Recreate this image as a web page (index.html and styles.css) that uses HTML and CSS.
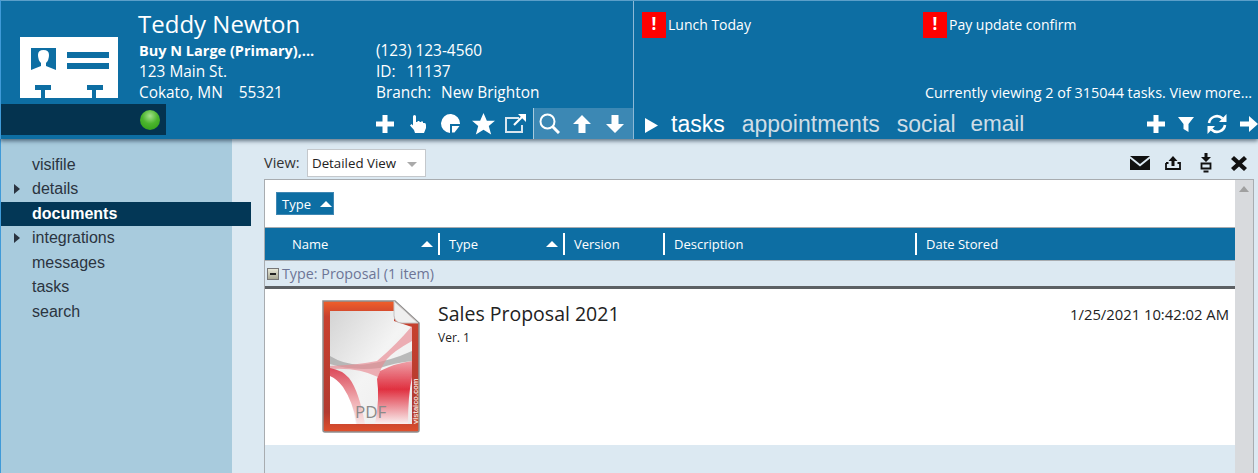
FILE: index.html
```html
<!DOCTYPE html>
<html lang="en">
<head>
<meta charset="utf-8">
<title>Teddy Newton</title>
<link rel="stylesheet" href="styles.css">
</head>
<body>
<div class="app">
  <header class="header">
    <section class="contact">
      <div class="contact-top">
        <div class="card-col">
          <svg width="98" height="61" viewBox="0 0 98 61">
            <path fill="#fff" d="M0 0H98V61H76V53H83V48H67V53H72V61H25V53H31V48H15V53H21V61H0Z"/>
            <path fill="#0d6ea3" d="M11 11H36V33L26 29V26Q29 23 29 18 29 13 23.500 13 18 13 18 18 18 23 21 26V29L11 33Z"/>
            <rect fill="#0d6ea3" x="47" y="15" width="42" height="6"/>
            <rect fill="#0d6ea3" x="47" y="26" width="42" height="6"/>
          </svg>
        </div>
        <div class="info">
          <h1 class="name">Teddy Newton</h1>
          <div class="info-grid">
            <div>
              <div class="line strong">Buy N Large (Primary),...</div>
              <div class="line">123 Main St.</div>
              <div class="line">Cokato, MN<span class="gap-zip">55321</span></div>
            </div>
            <div>
              <div class="line">(123) 123-4560</div>
              <div class="line">ID:<span class="gap-id">11137</span></div>
              <div class="line">Branch:<span class="gap-branch">New Brighton</span></div>
            </div>
          </div>
        </div>
      </div>
      <div class="contact-bottom">
        <div class="status-bar"><span class="status-dot"></span></div>
        <div class="tools">
          <div class="tool-group">
            <span class="tool"><svg width="18" height="18" viewBox="0 0 18 18"><path fill="#fff" d="M6.500 0H11.500V6.500H18V11.500H11.500V18H6.500V11.500H0V6.500H6.500Z"/></svg></span>
            <span class="tool"><svg width="16" height="18" viewBox="0 0 16 18"><path fill="#fff" d="M3 1.500A1.500 1.500 0 0 1 6 1.500V7H7.500V6H9.500V7H11V6.500H13V8H14.500Q16 8 16 10V13L14 18H5L4 15 0 10.500 1.500 9 3 10.500Z"/></svg></span>
            <span class="tool"><svg width="20" height="19" viewBox="0 0 20 19"><path fill="#fff" d="M19 10A9.500 9.500 0 1 0 9 19V10ZM11 12H18.500L13.500 18.500H11Z"/></svg></span>
            <span class="tool"><svg width="23" height="22" viewBox="0 0 24 23"><path fill="#fff" d="M12 0L15.500 8H24L17.500 13.500 20 22.500 12 17.500 4 22.500 6.500 13.500 0 8H8.500Z"/></svg></span>
            <span class="tool"><svg width="22" height="19" viewBox="0 0 22 19"><path fill="none" stroke="#d8e6ef" stroke-width="2" d="M14 4H1V18H17V11"/><path fill="none" stroke="#fff" stroke-width="2.200" d="M9 11L17 3"/><path fill="#fff" d="M13 0H21V8Z"/></svg></span>
          </div>
          <div class="tool-group alt">
            <span class="tool"><svg width="21" height="21" viewBox="0 0 21 21"><circle cx="8.500" cy="8.500" r="7" fill="none" stroke="#fff" stroke-width="2"/><path stroke="#fff" stroke-width="3" d="M13.500 13.500L20 20"/></svg></span>
            <span class="tool"><svg width="18" height="18" viewBox="0 0 18 18"><path fill="#fff" d="M9 0L18 9H12.500V18H5.500V9H0Z"/></svg></span>
            <span class="tool"><svg width="18" height="18" viewBox="0 0 18 18"><path fill="#fff" d="M9 18L18 9H12.500V0H5.500V9H0Z"/></svg></span>
          </div>
        </div>
      </div>
    </section>
    <section class="activity">
      <div class="alerts">
        <div class="alert alert-first"><span class="bang">!</span><span class="alert-text">Lunch Today</span></div>
        <div class="alert"><span class="bang">!</span><span class="alert-text">Pay update confirm</span></div>
      </div>
      <div class="viewing">Currently viewing 2 of 315044 tasks. View more...</div>
      <div class="tabs">
        <svg class="play" width="13" height="15" viewBox="0 0 13 15"><path fill="#fff" d="M0 0L13 7.500 0 15Z"/></svg>
        <span class="tab active">tasks</span>
        <span class="tab">appointments</span>
        <span class="tab tab-tight">social</span>
        <span class="tab tab-narrow">email</span>
        <div class="tab-tools">
          <svg width="18" height="18" viewBox="0 0 18 18"><path fill="#fff" d="M6.500 0H11.500V6.500H18V11.500H11.500V18H6.500V11.500H0V6.500H6.500Z"/></svg>
          <svg width="16" height="15" viewBox="0 0 16 15"><path fill="#fff" d="M0 0H16L10.500 7V15L5.500 12V7Z"/></svg>
          <svg width="20" height="20" viewBox="0 0 20 20"><path fill="none" stroke="#fff" stroke-width="2.600" d="M2 9A8 8 0 0 1 15.500 4.500M18 11A8 8 0 0 1 4.500 15.500"/><path fill="#fff" d="M19.500 0V8H12ZM0.500 20V12H8Z"/></svg>
          <svg width="18" height="16" viewBox="0 0 18 16"><path fill="#fff" d="M0 5.500H9V0L18 8 9 16V10.500H0Z"/></svg>
        </div>
      </div>
    </section>
  </header>
  <div class="body">
    <nav class="side">
      <div class="side-item">visifile</div>
      <div class="side-item more">details</div>
      <div class="side-item current">documents</div>
      <div class="side-item more">integrations</div>
      <div class="side-item">messages</div>
      <div class="side-item">tasks</div>
      <div class="side-item">search</div>
    </nav>
    <main class="main">
      <div class="viewbar">
        <span class="view-label">View:</span>
        <div class="select"><span>Detailed View</span><i class="select-arrow"></i></div>
        <div class="actions">
          <svg width="20" height="14" viewBox="0 0 20 14"><path fill="#111" d="M0 0H20L10 8ZM0 2.500L10 10.500 20 2.500V14H0Z"/></svg>
          <svg width="16" height="14" viewBox="0 0 16 14"><path fill="#111" d="M8 0L12.500 5H9.500V10H6.500V5H3.500Z"/><path fill="none" stroke="#111" stroke-width="1.800" d="M1 7V13H15V7H12.500M1 7H3.500"/></svg>
          <svg width="12" height="20" viewBox="0 0 12 20"><path fill="#111" d="M4.500 0H7.500V4H11L6 9 1 4H4.500Z"/><path fill="none" stroke="#111" stroke-width="1.800" d="M1.500 10.500H10.500V15.500H1.500Z"/><rect fill="#111" x="3.500" y="17.500" width="5" height="2"/></svg>
          <svg width="16" height="15" viewBox="0 0 16 15"><path fill="#111" d="M3 0L8 4.500 13 0 16 3 11 7.500 16 12 13 15 8 10.500 3 15 0 12 5 7.500 0 3Z"/></svg>
        </div>
      </div>
      <div class="panel">
        <div class="grid-area">
          <div class="groupbar">
            <div class="chip">Type <i class="up up-chip"></i></div>
          </div>
          <div class="thead">
            <div class="th th-name"><span>Name</span><i class="up"></i></div>
            <div class="th th-type"><span>Type</span><i class="up"></i></div>
            <div class="th th-version">Version</div>
            <div class="th th-desc">Description</div>
            <div class="th">Date Stored</div>
          </div>
          <div class="group-row"><span class="collapse"></span>Type: Proposal (1 item)</div>
          <div class="row">
            <div class="thumb">
              <svg width="100" height="135" viewBox="0 0 100 135">
                <defs>
                  <linearGradient id="rim" x1="0" y1="0" x2="0" y2="1"><stop offset="0" stop-color="#f0602a"/><stop offset=".12" stop-color="#c8402e"/><stop offset=".85" stop-color="#b23a30"/><stop offset="1" stop-color="#e0502c"/></linearGradient>
                  <linearGradient id="sheet" x1="0" y1="0" x2="1" y2="1"><stop offset="0" stop-color="#d4d4d4"/><stop offset=".5" stop-color="#f4f4f4"/><stop offset="1" stop-color="#ececec"/></linearGradient>
                  <linearGradient id="ribbon" x1="0" y1="0" x2="0" y2="1"><stop offset="0" stop-color="#eea0a8"/><stop offset=".45" stop-color="#e03040"/><stop offset=".72" stop-color="#ec9098"/><stop offset="1" stop-color="#faf0f0"/></linearGradient>
                  <linearGradient id="fade" x1="0" y1="0" x2="0" y2="1"><stop offset="0" stop-color="#dc4858"/><stop offset=".6" stop-color="#f0b0b4"/><stop offset="1" stop-color="#f8e4e4"/></linearGradient>
                  <filter id="soft" x="-5%" y="-5%" width="110%" height="110%"><feGaussianBlur stdDeviation=".7"/></filter>
                </defs>
                <path fill="url(#rim)" stroke="#8e8e8e" stroke-width="1.500" d="M1 2H73L97 24V131Q97 133 95 133H3Q1 133 1 131Z"/>
                <path fill="url(#sheet)" d="M8 12H72V22L90 28V125H8Z"/>
                <g filter="url(#soft)">
                  <path fill="#ababab" opacity=".8" d="M8 57Q26 68 46 65 68 62 90 52V62Q72 64 58 69 30 72 8 65Z"/>
                  <path fill="#e88890" opacity=".65" d="M90 27V42Q72 52 65 60 59 68 56 78 36 68 8 70V67Q36 66 55 62 74 46 90 27Z"/>
                  <path fill="url(#ribbon)" d="M58 72Q74 64 90 62V78Q86 96 86 125H53Q58 100 55 80Z"/>
                  <path fill="#fff" d="M8 77Q16 80 21 87 30 100 34 125H8Z"/>
                  <path fill="url(#fade)" d="M8 69Q20 71 27 79 37 92 43 125H35Q31 103 21 88 15 80 8 77Z"/>
                </g>
                <text class="pdf-label" x="33" y="119">PDF</text>
                <text class="pdf-mark" transform="translate(96 125) rotate(-90)">vistaico.com</text>
                <path fill="#efefef" stroke="#c4c4c4" d="M72 2L96 24H80Q73 24 72 17Z"/>
              </svg>
            </div>
            <div class="doc">
              <div class="doc-title">Sales Proposal 2021</div>
              <div class="doc-ver">Ver. 1</div>
            </div>
            <div class="doc-date">1/25/2021 10:42:02 AM</div>
          </div>
        </div>
        <div class="scrollbar"><i class="scroll-up"></i></div>
      </div>
    </main>
  </div>
</div>
</body>
</html>
```

FILE: styles.css
```css
* { box-sizing: border-box; }
html, body { margin: 0; height: 100%; overflow: hidden; }
body { font-family: "Open Sans", "Noto Sans", sans-serif; background: #dce9f2; }
.app { display: flex; flex-direction: column; height: 473px; width: 1258px; overflow: hidden; }

.header {
  position: relative; z-index: 2; display: flex; flex: 0 0 139px; height: 139px;
  background: #0d6ea3; color: #fff; border-top: 1px solid #5b9fc9; border-left: 1px solid #3f9ad8;
  box-shadow: 0 2px 4px rgba(20, 40, 60, .6);
}
.contact { flex: 0 0 633px; min-width: 0; display: flex; flex-direction: column; border-right: 1px solid #8db9d6; }
.contact-top { display: flex; height: 103px; }
.card-col { flex: 0 0 137px; padding: 36px 0 0 19px; }
.info { flex: 1; padding-top: 8px; }
.name { margin: 0; font-size: 24px; font-weight: 400; line-height: 29px; }
.info-grid { display: grid; grid-template-columns: 237px 1fr; margin-top: 2px; padding-left: 1px; }
.line { font-size: 15.400px; line-height: 21px; white-space: nowrap; }
.strong { font-weight: 700; font-size: 14.500px; }
.gap-zip { margin-left: 16px; }
.gap-id { margin-left: 11px; }
.gap-branch { margin-left: 10px; }
.contact-bottom { display: flex; flex: 1; }
.status-bar { flex: 0 0 165px; height: 31px; background: #04334f; display: flex; align-items: center; justify-content: flex-end; padding-right: 6px; }
.status-dot { width: 20px; height: 20px; border-radius: 50%; background: radial-gradient(circle at 50% 30%, #a4e08c 0%, #4cb52e 45%, #2b9a14 100%); }
.tools { display: flex; margin-left: 203px; margin-top: 4px; flex: 1; min-width: 0; }
.tool-group { display: flex; align-items: center; flex: 0 0 163.500px; }
.tool-group.alt { flex: 1 1 0; min-width: 0; background: #3c88b4; border-left: 1px solid #a8cbdd; }
.tool { flex: 0 0 32.670px; display: flex; justify-content: center; align-items: center; }

.activity { flex: 1; display: flex; flex-direction: column; padding-left: 8px; min-width: 0; }
.alerts { display: flex; padding-top: 11px; height: 64px; }
.alert { display: flex; align-items: center; height: 26px; font-size: 14px; }
.alert-first { width: 281px; }
.alert-text { margin-top: -2px; }
.bang { width: 24px; height: 26px; margin-right: 2px; background: #ff0000; color: #fff; font-weight: 700; font-size: 17px; text-align: center; line-height: 24px; }
.viewing { text-align: right; font-size: 14.400px; line-height: 20px; padding-right: 6px; margin-top: 18px; white-space: nowrap; }
.tabs { display: flex; align-items: center; height: 30px; margin-top: 6px; }
.play { margin: 2px 13px 0 3px; flex: none; }
.tab { font-family: "Liberation Sans", Arial, sans-serif; font-size: 23px; line-height: 30px; color: #cfdde6; margin-right: 17px; white-space: nowrap; }
.tab.active { color: #fff; }
.tab-tight { margin-right: 15px; }
.tab-narrow { font-size: 22.500px; }
.tab-tools { margin-left: auto; display: flex; align-items: center; gap: 13px; width: 111px; flex: none; }

.body { flex: 1; display: flex; min-height: 0; }
.side { flex: 0 0 232px; min-width: 0; background: #a8cbdd; border-left: 1px solid #3f9ad8; padding-top: 13.500px; }
.side-item { font-family: "Liberation Sans", Arial, sans-serif; font-size: 16px; line-height: 24.500px; height: 24.500px; padding-left: 31px; color: #2b3440; position: relative; }
.side-item.more::before { content: ""; position: absolute; left: 13px; top: 7px; border-left: 6px solid #2b3440; border-top: 5px solid transparent; border-bottom: 5px solid transparent; }
.side-item.current { width: 250px; background: #033756; color: #fff; font-weight: 700; }

.main { flex: 1; display: flex; flex-direction: column; padding: 9px 4px 0 32px; min-width: 0; }
.viewbar { display: flex; align-items: center; height: 30px; flex: none; margin-bottom: 1px; }
.view-label { font-size: 14.500px; color: #333; width: 43px; margin-top: -2px; }
.select { width: 119px; height: 28px; background: #fff; border: 1px solid #c4c8cc; font-size: 13.300px; color: #222; display: flex; align-items: center; padding-left: 4px; }
.select-arrow { margin-left: 11px; border-top: 5px solid #aaa; border-left: 5px solid transparent; border-right: 5px solid transparent; margin-top: 2px; }
.actions { margin-left: auto; display: flex; align-items: center; gap: 15px; padding-right: 7px; }
.actions svg:nth-child(3) { margin: 0 4px 0 4px; }

.panel { flex: 1; display: flex; border: 1px solid #a8acb0; border-bottom: 0; min-height: 0; }
.grid-area { flex: 1; min-width: 0; }
.groupbar { height: 48px; background: #fff; padding: 12px 11px; border-bottom: 1px solid #a8acb0; }
.chip { width: 58px; height: 23px; background: #0d6ea3; color: #fff; font-size: 13px; display: flex; align-items: center; padding-left: 5px; border: 1px solid #3f87b3; }
.up { display: block; border-bottom: 6px solid #fff; border-left: 6px solid transparent; border-right: 6px solid transparent; }
.up-chip { margin-left: 9px; }
.thead { display: grid; grid-template-columns: 173px 125px 100px 252px 1fr; align-items: center; height: 33px; background: #0d6ea3; color: #fff; font-size: 13px; border-bottom: 1px solid #a8acb0; }
.th { height: 22px; display: flex; align-items: center; justify-content: space-between; padding: 0 5px 0 9px; white-space: nowrap; border-left: 2px solid #fff; }
.th-name { border-left: 0; padding-left: 27px; }
.group-row { height: 28px; background: #dce9f2; border-bottom: 3px solid #5c6064; color: #6d7596; font-size: 14.300px; display: flex; align-items: center; padding-left: 2px; }
.collapse { width: 12px; height: 12px; margin-right: 3px; background: linear-gradient(#e8e8d8, #a8a894); border: 1px solid #777; position: relative; }
.collapse::after { content: ""; position: absolute; left: 2px; right: 2px; top: 4px; height: 2px; background: #222; }
.row { display: flex; height: 156px; background: #fff; color: #222; }
.thumb { flex: 0 0 173px; padding: 10px 0 0 57px; }
.doc { padding-top: 12px; }
.doc-title { font-size: 19.500px; line-height: 26px; }
.doc-ver { font-size: 12px; line-height: 20px; margin-top: 1px; }
.doc-date { margin-left: auto; padding: 15px 6px 0 0; font-size: 14.800px; line-height: 20px; }
.pdf-label { font-family: "Open Sans", sans-serif; font-size: 17px; fill: #8a8a8a; }
.pdf-mark { font-family: "Liberation Sans", sans-serif; font-size: 7.500px; font-weight: 700; fill: #f4e0dc; }

.scrollbar { flex: 0 0 18px; background: #d8dadd; display: flex; justify-content: center; padding-top: 6px; }
.scroll-up { display: block; width: 0; height: 0; border-bottom: 6px solid #a0a0a0; border-left: 5px solid transparent; border-right: 5px solid transparent; }
```
